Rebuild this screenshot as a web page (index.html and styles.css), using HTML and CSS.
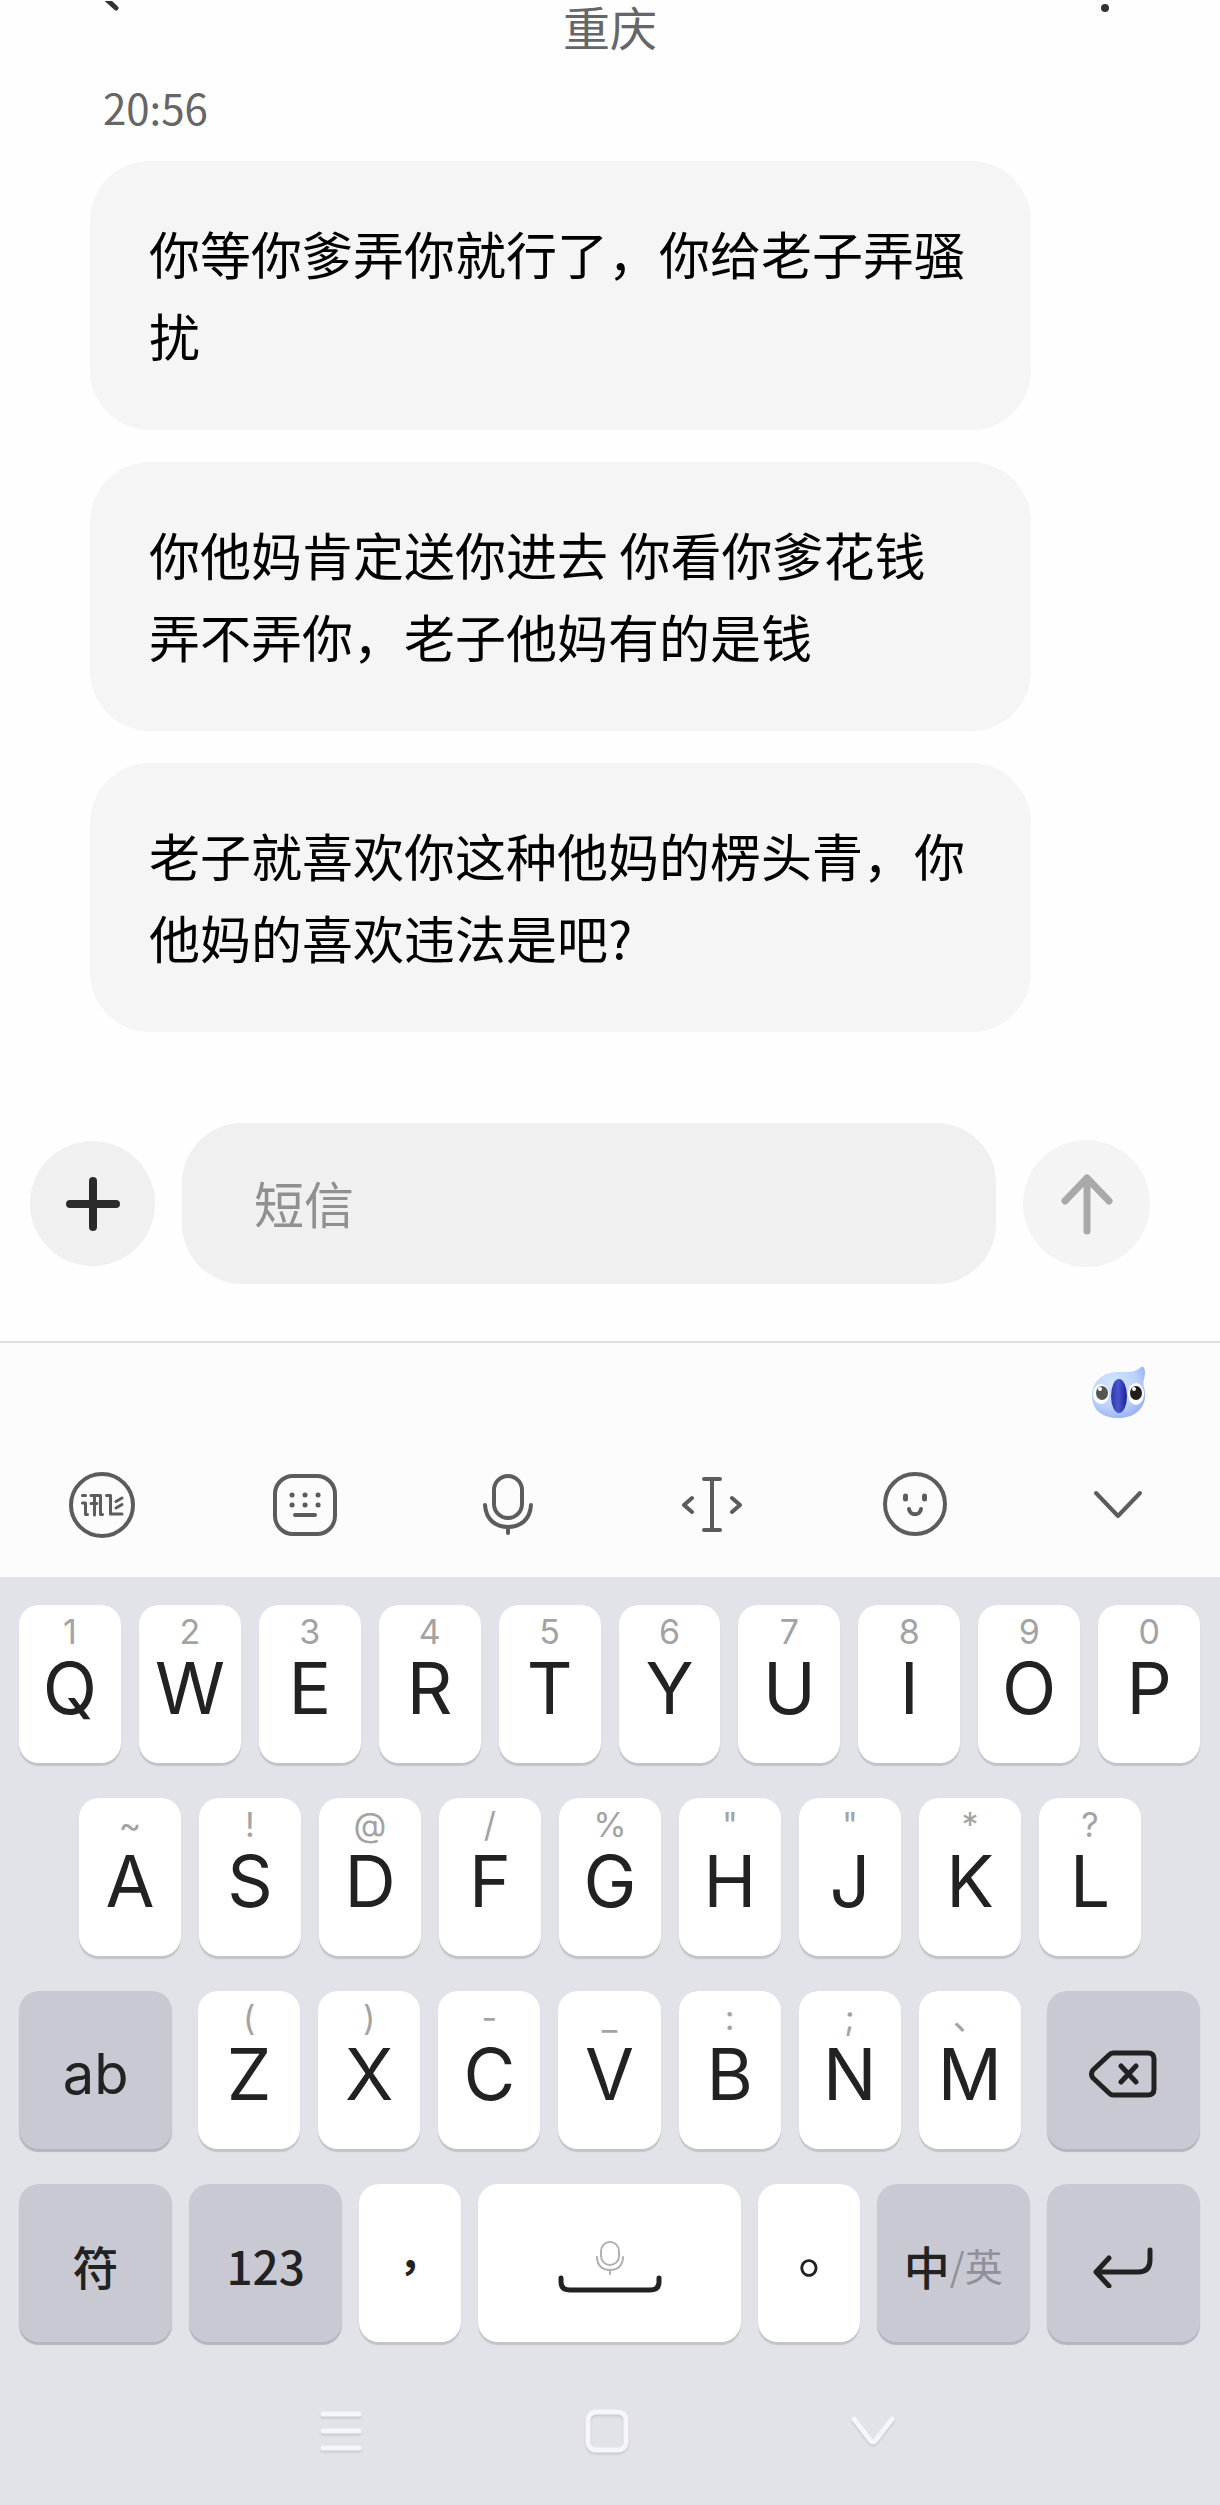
FILE: index.html
```html
<!DOCTYPE html>
<html lang="zh-CN">
<head>
  <meta charset="UTF-8">
  <meta name="viewport" content="width=device-width, initial-scale=1">
  <title>短信</title>
  <link rel="stylesheet" href="styles.css">
</head>
<body>
  <header class="header">
    <button class="header-btn" aria-label="返回">
      <svg width="30" height="50" viewBox="0 0 30 50"><path d="M4 -4L16 7" stroke="#333" stroke-width="5" stroke-linecap="round"/></svg>
    </button>
    <h1>重庆</h1>
    <button class="header-btn more" aria-label="更多">
      <svg width="30" height="50" viewBox="0 0 30 50"><circle cx="15" cy="7" r="4" fill="#333"/></svg>
    </button>
  </header>

  <main class="messages">
    <time class="time">20:56</time>
    <p class="bubble">你等你爹弄你就行了，你给老子弄骚扰</p>
    <p class="bubble">你他妈肯定送你进去 你看你爹花钱弄不弄你，老子他妈有的是钱</p>
    <p class="bubble">老子就喜欢你这种他妈的楞头青，你他妈的喜欢违法是吧?</p>
  </main>

  <form class="composer">
    <button type="button" class="round add" aria-label="添加">
      <svg width="54" height="54" viewBox="0 0 54 54"><path d="M27 4V50M4 27H50" stroke="#2b2b2b" stroke-width="8" stroke-linecap="round"/></svg>
    </button>
    <input class="sms" type="text" placeholder="短信" aria-label="短信">
    <button type="button" class="round send" aria-label="发送">
      <svg width="54" height="62" viewBox="0 0 54 62"><path d="M27 58V5M5 28L27 5L49 28" fill="none" stroke="#a9a9a9" stroke-width="7" stroke-linecap="round" stroke-linejoin="round"/></svg>
    </button>
  </form>

  <section class="tools">
    <div class="candidate">
      <button class="bird" aria-label="助手">
        <svg width="58" height="56" viewBox="0 0 58 56">
          <defs>
            <radialGradient id="head" cx="40%" cy="35%" r="75%">
              <stop offset="0" stop-color="#d3e8ff"/>
              <stop offset="0.6" stop-color="#bcd2fb"/>
              <stop offset="1" stop-color="#8fa8f4"/>
            </radialGradient>
            <linearGradient id="beak" x1="0" x2="1" y1="0" y2="0">
              <stop offset="0" stop-color="#3038a8"/>
              <stop offset="0.45" stop-color="#4a55d0"/>
              <stop offset="1" stop-color="#1d2190"/>
            </linearGradient>
          </defs>
          <path d="M3 31C3 16 14 7 29 7C37 7 45 8 51 3C54 0 56 3 56 8C56 14 53 17 55 22C60 40 48 53 30 53C13 53 3 45 3 31Z" fill="url(#head)"/>
          <ellipse cx="12" cy="29" rx="8" ry="10" fill="#fff"/>
          <ellipse cx="47" cy="29" rx="8" ry="11" fill="#fff"/>
          <ellipse cx="13" cy="28" rx="6" ry="7" fill="#555"/>
          <ellipse cx="47" cy="28" rx="6" ry="7" fill="#221d1d"/>
          <circle cx="11" cy="24" r="2" fill="#fff"/>
          <circle cx="45" cy="24" r="2" fill="#fff"/>
          <ellipse cx="30" cy="31" rx="8" ry="17" fill="url(#beak)"/>
        </svg>
      </button>
    </div>
    <nav class="toolbar">
      <button aria-label="讯飞">
        <svg width="68" height="68" viewBox="0 0 68 68">
          <circle cx="34" cy="34" r="31"/>
          <path class="thin" d="M14.5 24.5H17.5M14.5 32H17.5V43.5H19.5M23 24.5H32.5V43.5H34.5M26.5 24.5V44M23 32.5H29M38.5 24.5H42.5V43H54M48 30.5L54 27M48 37L54 33.5"/>
        </svg>
      </button>
      <button aria-label="键盘">
        <svg width="68" height="68" viewBox="0 0 68 68">
          <rect x="4" y="5" width="60" height="58" rx="18"/>
          <path d="M21 24H21.1M34 24H34.1M47 24H47.1M21 34H21.1M34 34H34.1M47 34H47.1" stroke-width="6" class="dots"/>
          <path d="M24 44H44"/>
        </svg>
      </button>
      <button aria-label="语音">
        <svg width="68" height="68" viewBox="0 0 68 68">
          <rect x="20" y="5" width="28" height="42" rx="14"/>
          <path d="M11 34C12 49 22 56 34 56C46 56 56 49 57 34M34 56V62"/>
        </svg>
      </button>
      <button aria-label="移动光标">
        <svg width="68" height="68" viewBox="0 0 68 68">
          <path d="M26 8H42M26 59H42M34 8V59M14 27L6 34L14 41M54 27L62 34L54 41"/>
        </svg>
      </button>
      <button aria-label="表情">
        <svg width="68" height="68" viewBox="0 0 68 68">
          <circle cx="34" cy="33" r="30"/>
          <path d="M24.5 25V28M43.5 25V28" class="dots"/>
          <path d="M28 38C29 45 39 45 40 38"/>
        </svg>
      </button>
      <button aria-label="收起">
        <svg width="68" height="68" viewBox="0 0 68 68"><path d="M12 22L34 45L56 22"/></svg>
      </button>
    </nav>
  </section>

  <section class="keyboard">
    <div class="row">
      <button class="key"><small>1</small>Q</button>
      <button class="key"><small>2</small>W</button>
      <button class="key"><small>3</small>E</button>
      <button class="key"><small>4</small>R</button>
      <button class="key"><small>5</small>T</button>
      <button class="key"><small>6</small>Y</button>
      <button class="key"><small>7</small>U</button>
      <button class="key"><small>8</small>I</button>
      <button class="key"><small>9</small>O</button>
      <button class="key"><small>0</small>P</button>
    </div>
    <div class="row row2">
      <button class="key"><small>~</small>A</button>
      <button class="key"><small>!</small>S</button>
      <button class="key"><small>@</small>D</button>
      <button class="key"><small>/</small>F</button>
      <button class="key"><small>%</small>G</button>
      <button class="key"><small>"</small>H</button>
      <button class="key"><small>"</small>J</button>
      <button class="key"><small>*</small>K</button>
      <button class="key"><small>?</small>L</button>
    </div>
    <div class="row row3">
      <button class="key fn case">ab</button>
      <div class="letters">
        <button class="key"><small>(</small>Z</button>
        <button class="key"><small>)</small>X</button>
        <button class="key"><small>-</small>C</button>
        <button class="key"><small>_</small>V</button>
        <button class="key"><small>:</small>B</button>
        <button class="key"><small>;</small>N</button>
        <button class="key"><small>、</small>M</button>
      </div>
      <button class="key fn icon" aria-label="删除">
        <svg width="70" height="50" viewBox="0 0 70 50"><path d="M25 4H60Q66 4 66 10V40Q66 46 60 46H25Q23 46 21 44L5 29Q2 25 5 21L21 6Q23 4 25 4ZM33 17L48 33M48 17L33 33"/></svg>
      </button>
    </div>
    <div class="row row4">
      <button class="key fn">符</button>
      <button class="key fn">123</button>
      <button class="key mark comma">，</button>
      <button class="key icon space" aria-label="空格">
        <svg width="104" height="54" viewBox="0 0 104 54">
          <g class="mic"><rect x="43" y="2" width="18" height="23" rx="9"/><path d="M39 17C39 25 44 30 52 30C60 30 65 25 65 17M52 30V34"/></g>
          <path d="M3 38V42Q3 50 12 50H92Q101 50 101 42V38"/>
        </svg>
      </button>
      <button class="key mark">。</button>
      <button class="key fn lang">中<span>/英</span></button>
      <button class="key fn icon" aria-label="换行">
        <svg width="60" height="42" viewBox="0 0 60 42"><path d="M57 4V14Q57 26 45 26H4M16 12L3 26L16 40"/></svg>
      </button>
    </div>
    <nav class="system">
      <button aria-label="任务">
        <svg width="48" height="48" viewBox="0 0 48 48"><path d="M6 7H42M6 24H42M6 41H42"/></svg>
      </button>
      <button aria-label="主页">
        <svg width="48" height="48" viewBox="0 0 48 48"><rect x="5" y="5" width="38" height="38" rx="8"/></svg>
      </button>
      <button aria-label="收起键盘">
        <svg width="48" height="48" viewBox="0 0 48 48"><path d="M5 12L22 34Q24 36 26 34L43 12"/></svg>
      </button>
    </nav>
  </section>
</body>
</html>
```
FILE: styles.css
```css
* {
  box-sizing: border-box;
}
body {
  margin: 0;
  background-color: #fefefe;
  font-family: "Noto Sans CJK SC", sans-serif;
  color: #000;
}
button {
  margin: 0;
  padding: 0;
  border: none;
  background: none;
  font-family: inherit;
  color: inherit;
  cursor: pointer;
}
svg {
  display: block;
}

/* 顶部标题 */
.header {
  display: grid;
  grid-template-columns: 1fr auto 1fr;
  padding: 0 100px;
}
.header-btn {
  justify-self: start;
}
.more {
  justify-self: end;
}
h1 {
  margin: 0;
  font-size: 47px;
  font-weight: 400;
  line-height: 52px;
  color: #666;
}

/* 短信列表 */
.messages {
  display: flex;
  flex-direction: column;
  gap: 32px;
  padding: 25px 189px 0 90px;
}
.time {
  margin-bottom: -8px;
  padding-left: 13px;
  font-size: 42px;
  line-height: 60px;
  color: #666;
}
.bubble {
  margin: 0;
  padding: 51px 61px 54px 59px;
  border-radius: 60px;
  background-color: #f5f5f5;
  font-size: 51px;
  line-height: 82px;
}

/* 输入栏 */
.composer {
  display: flex;
  align-items: center;
  gap: 27px;
  padding: 91px 70px 57px 30px;
}
.round {
  display: flex;
  justify-content: center;
  align-items: center;
  flex: none;
  width: 125px;
  height: 125px;
  border-radius: 50%;
  background-color: #f0f0f0;
}
.send {
  width: 127px;
  height: 127px;
  background-color: #f4f4f4;
}
.sms {
  flex: 1;
  min-width: 0;
  height: 161px;
  padding: 0 72px 4px;
  border: none;
  border-radius: 60px;
  outline: none;
  background-color: #f0f0f0;
  font-family: inherit;
  font-size: 50px;
}
.sms::placeholder {
  color: #909090;
  opacity: 1;
}

/* 工具栏 */
.tools {
  padding-bottom: 9px;
  border-top: 2px solid #e0e0e1;
  background-color: #fcfcfc;
}
.candidate {
  display: flex;
  justify-content: flex-end;
  align-items: center;
  height: 99px;
  padding-right: 73px;
}
.toolbar {
  display: flex;
  height: 126px;
}
.toolbar button {
  display: flex;
  flex: 1;
  justify-content: center;
  align-items: center;
}
.toolbar svg {
  fill: none;
  stroke: #5c5c5c;
  stroke-width: 4;
  stroke-linecap: round;
  stroke-linejoin: round;
}
.toolbar .thin {
  stroke-width: 3;
}
.toolbar .dots {
  stroke-width: 5;
}

/* 键盘 */
.keyboard {
  display: flex;
  flex-direction: column;
  gap: 35px;
  padding-top: 28px;
  background-color: #e2e3e9;
}
.row {
  display: flex;
  gap: 18px;
  padding: 0 20px 0 19px;
}
.row2 {
  padding: 0 79px;
}
.row3 {
  gap: 26px;
}
.row4 {
  gap: 17px;
}
.letters {
  display: flex;
  flex: 822 1 0;
  gap: 18px;
}
.key {
  display: flex;
  flex: 102 1 0;
  flex-direction: column;
  align-items: center;
  min-width: 0;
  height: 158px;
  padding-top: 7px;
  border-radius: 20px;
  background-color: #fff;
  box-shadow: 0 3px 1px #c3c4ca;
  font-family: Inter, "Noto Sans CJK SC", sans-serif;
  font-size: 71px;
  line-height: 72px;
  color: #222;
}
.key small {
  font-size: 34px;
  line-height: 40px;
  color: #a3a3a3;
}
.fn,
.mark,
.icon {
  flex-direction: row;
  justify-content: center;
  padding-top: 0;
}
.fn {
  flex-grow: 153;
  padding-top: 4px;
  background-color: #c9c9d3;
  box-shadow: 0 3px 1px #b4b4be;
  font-family: "Noto Sans CJK SC", sans-serif;
  font-size: 46px;
  font-weight: 500;
}
.case {
  padding-top: 8px;
  font-family: Inter, sans-serif;
  font-size: 56px;
  font-weight: 400;
}
.mark {
  padding-top: 4px;
  font-family: "Noto Sans CJK TC", sans-serif;
  font-size: 56px;
}
.comma {
  font-size: 42px;
  font-weight: 700;
}
.lang span {
  font-size: 38px;
  font-weight: 400;
  color: #90909a;
}
.icon {
  padding-top: 8px;
}
.icon svg {
  fill: none;
  stroke: #222;
  stroke-width: 5;
  stroke-linecap: round;
  stroke-linejoin: round;
}
.icon .mic {
  stroke: #b0b0b0;
  stroke-width: 2;
}
.space {
  flex-grow: 262;
}

/* 系统导航 */
.system {
  display: flex;
  height: 128px;
  padding: 0 214px 20px 208px;
}
.system button {
  display: flex;
  flex: 1;
  justify-content: center;
  align-items: center;
}
.system svg {
  fill: none;
  stroke: #f5f5fa;
  stroke-width: 5;
  stroke-linecap: round;
  stroke-linejoin: round;
  filter: drop-shadow(0 2px 1px #c8c9d0);
}
```
